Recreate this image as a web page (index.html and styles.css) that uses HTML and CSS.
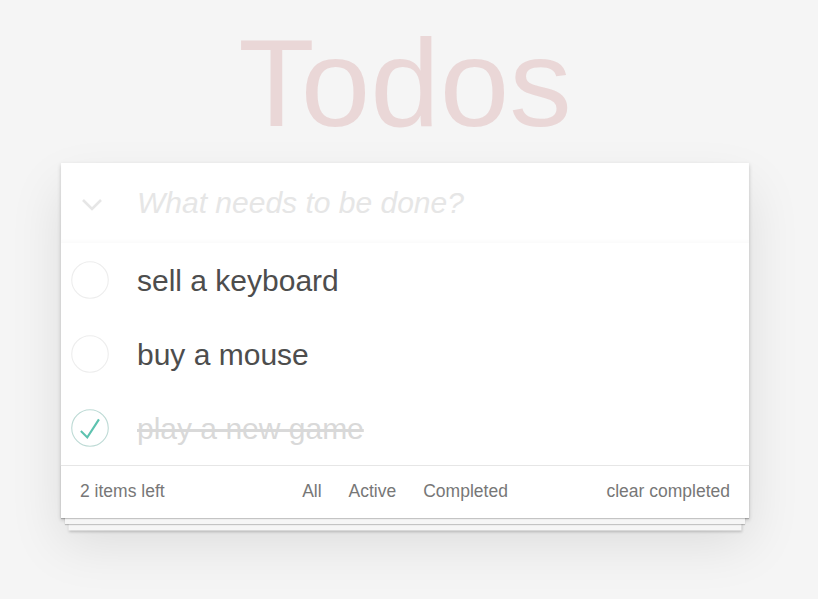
FILE: index.html
```html
<!DOCTYPE html>
<html lang="en">
<head>
<meta charset="utf-8">
<title>Todos</title>
<link rel="stylesheet" href="styles.css">
</head>
<body>
<div class="page">
  <h1 class="title">Todos</h1>
  <section class="todoapp">
    <header class="new-row">
      <span class="toggle-all">
        <svg width="22" height="13" viewBox="0 0 22 13"><polyline points="2,2 11,11 20,2" fill="none" stroke="#e6e6e6" stroke-width="2.6"/></svg>
      </span>
      <input class="new-todo" type="text" placeholder="What needs to be done?">
    </header>
    <ul class="todo-list">
      <li class="todo">
        <svg class="toggle" width="38" height="38" viewBox="-2 -2 104 104"><circle cx="50" cy="50" r="50" fill="none" stroke="#ededed" stroke-width="3"/></svg>
        <span class="label">sell a keyboard</span>
      </li>
      <li class="todo">
        <svg class="toggle" width="38" height="38" viewBox="-2 -2 104 104"><circle cx="50" cy="50" r="50" fill="none" stroke="#ededed" stroke-width="3"/></svg>
        <span class="label">buy a mouse</span>
      </li>
      <li class="todo completed">
        <svg class="toggle" width="38" height="38" viewBox="-2 -2 104 104"><circle cx="50" cy="50" r="50" fill="none" stroke="#bddad5" stroke-width="3"/><path fill="#5dc2af" d="M72 25L42 71 27 56l-4 4 20 20 34-52z"/></svg>
        <span class="label">play a new game</span>
      </li>
    </ul>
    <footer class="footer">
      <span class="count">2 items left</span>
      <ul class="filters">
        <li><a class="filter">All</a></li>
        <li><a class="filter">Active</a></li>
        <li><a class="filter">Completed</a></li>
      </ul>
      <span class="clear">clear completed</span>
    </footer>
  </section>
</div>
</body>
</html>
```
FILE: styles.css
```css
html, body {
  margin: 0;
  padding: 0;
  background: #f5f5f5;
}
body {
  color: #4d4d4d;
  font-family: "Liberation Sans", Arial, sans-serif;
  padding-right: 8px;
  min-height: 599px;
}
.page {
  width: 688px;
  margin: 0 auto;
  padding-bottom: 80px;
}
.title {
  margin: 20px 0 18px;
  font-size: 125px;
  line-height: 125px;
  font-weight: normal;
  text-align: center;
  color: rgba(175, 47, 47, 0.15);
}
.todoapp {
  background: #fff;
  box-shadow: 0 2px 4px 0 rgba(0,0,0,0.2), 0 25px 50px 0 rgba(0,0,0,0.1);
}
.new-row {
  display: flex;
  align-items: center;
  height: 80px;
  box-shadow: inset 0 -3px 2px rgba(0,0,0,0.015);
}
.toggle-all {
  width: 62px;
  display: flex;
  justify-content: center;
  padding-top: 2px;
}
.new-todo {
  flex: 1;
  margin-left: 14px;
  border: none;
  outline: none;
  background: transparent;
  font-family: "Liberation Sans", Arial, sans-serif;
  font-size: 30px;
  line-height: 42px;
  padding: 0;
  color: #4d4d4d;
}
.new-todo::placeholder {
  font-style: italic;
  color: #e6e6e6;
}
.todo-list {
  list-style: none;
  margin: 0;
  padding: 0;
}
.todo {
  display: flex;
  align-items: center;
  height: 74px;
  font-size: 30px;
  line-height: 36px;
}
.toggle {
  margin-left: 10px;
  flex: none;
}
.label {
  margin-left: 28px;
  padding-top: 2px;
}
.completed .label {
  color: #d9d9d9;
  text-decoration: line-through;
}
.footer {
  display: grid;
  grid-template-columns: 1fr auto 1fr;
  align-items: center;
  border-top: 1px solid #e6e6e6;
  padding: 12px 19px 13px;
  font-size: 17.5px;
  line-height: 25px;
  color: #777;
  box-shadow: 0 1px 1px rgba(0,0,0,0.2),
              0 10px 0 -4px #f6f6f6,
              0 11px 1px -4px rgba(0,0,0,0.2),
              0 20px 0 -7.5px #f6f6f6,
              0 21px 2.5px -7.5px rgba(0,0,0,0.2);
}
.filters {
  list-style: none;
  margin: 0;
  padding: 0;
  display: flex;
}
.filter {
  display: inline-block;
  margin: 0 4px;
  padding: 0 8.5px;
  border: 1px solid transparent;
  border-radius: 4px;
}
.clear {
  justify-self: end;
}
```
